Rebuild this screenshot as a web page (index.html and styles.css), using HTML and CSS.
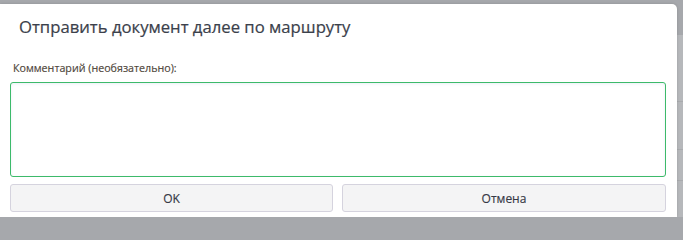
FILE: index.html
```html
<!DOCTYPE html>
<html lang="ru">
<head>
<meta charset="utf-8">
<title>Отправить документ далее по маршруту</title>
<link rel="stylesheet" href="styles.css">
</head>
<body>
<div class="backdrop">
  <div class="dialog">
    <div class="dialog-header">Отправить документ далее по маршруту</div>
    <div class="dialog-body">
      <label class="field-label" for="comment">Комментарий (необязательно):</label>
      <textarea id="comment" class="comment"></textarea>
      <div class="actions">
        <button class="btn">OK</button>
        <button class="btn">Отмена</button>
      </div>
    </div>
  </div>
</div>
</body>
</html>
```

FILE: styles.css
```css
html, body {
  margin: 0;
  padding: 0;
  height: 217px;
  overflow: hidden;
}
body {
  font-family: "Open Sans", "Noto Sans", sans-serif;
  background:
    linear-gradient(to bottom, transparent 101px, #a9abae 101px, #a9abae 102px, transparent 102px),
    linear-gradient(to bottom, transparent 149px, #a9abae 149px, #a9abae 150px, transparent 150px),
    linear-gradient(to bottom, transparent 180px, #a9abae 180px, #a9abae 181px, transparent 181px),
    linear-gradient(to bottom, #a6a8ac 0, #a6a8ac 35px, #b6b8bb 35px);
}
.backdrop {
  padding-top: 4px;
}
.dialog {
  width: 677px;
  height: 213px;
  background: #ffffff;
  border-top-right-radius: 5px;
  box-shadow: 0 0 3px rgba(0, 0, 0, 0.15);
}
.dialog-header {
  padding: 12px 0 23px 19px;
  font-size: 16.7px;
  line-height: 22px;
  color: #3b414b;
  -webkit-text-stroke: 0.2px #3b414b;
}
.dialog-body {
  display: flex;
  flex-direction: column;
  padding: 0 11px 0 10px;
}
.field-label {
  margin-left: 3px;
  font-size: 10.7px;
  line-height: 15px;
  color: #4e4539;
  margin-bottom: 6px;
  -webkit-text-stroke: 0.15px #4e4539;
}
.comment {
  box-sizing: border-box;
  width: 656px;
  height: 95px;
  margin: 0;
  border: 1px solid #3dba6a;
  border-radius: 3px;
  box-shadow: inset 0 1px 3px rgba(120, 150, 200, 0.15);
  resize: none;
  outline: none;
  font-family: inherit;
}
.actions {
  display: grid;
  grid-template-columns: 323px 324px;
  column-gap: 9px;
  margin-top: 7px;
}
.btn {
  box-sizing: border-box;
  height: 28px;
  margin: 0;
  padding: 0;
  background: #f4f4f5;
  border: 1px solid #d5d3de;
  border-radius: 3px;
  font-family: inherit;
  font-size: 12px;
  color: #363945;
  -webkit-text-stroke: 0.15px #363945;
}
```
